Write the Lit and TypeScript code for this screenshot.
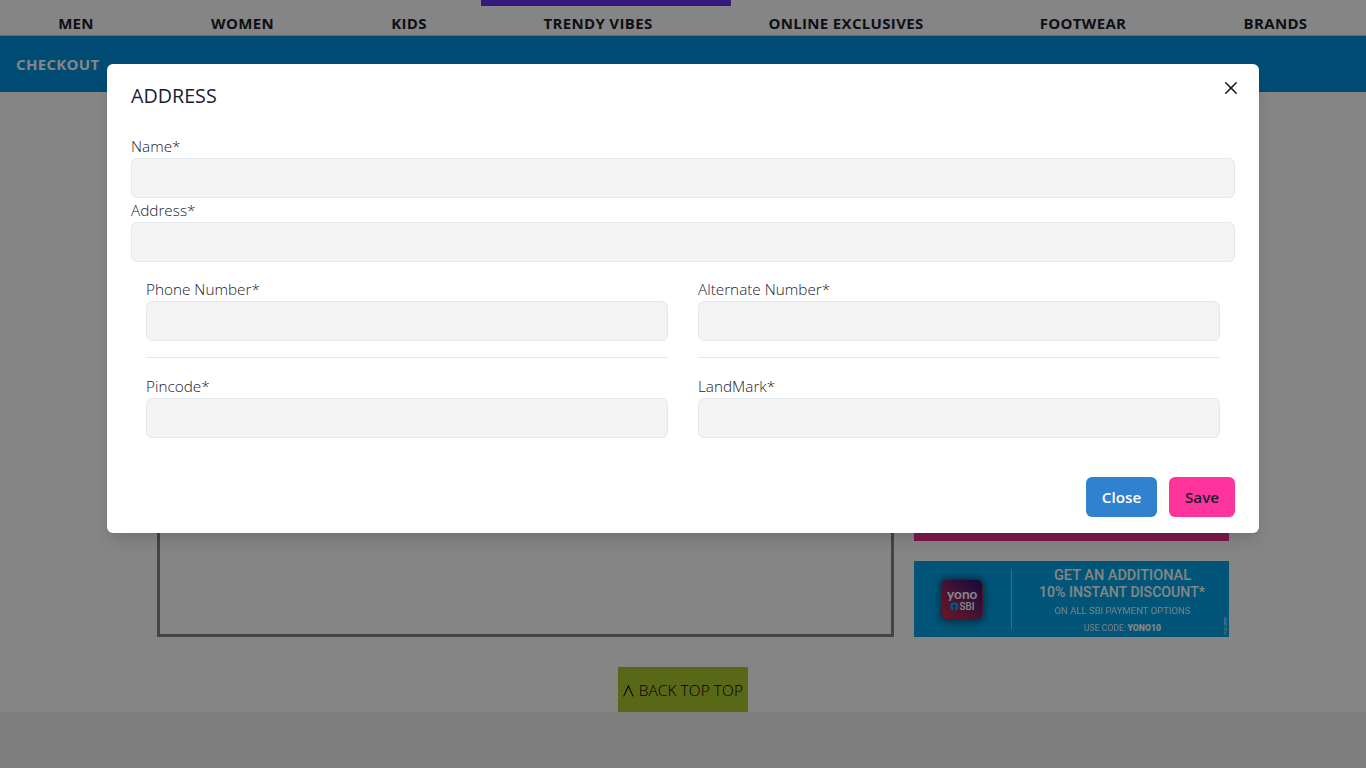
import { LitElement, html, css } from "lit";
import { customElement, property } from "lit/decorators.js";

@customElement("form-field")
class FormField extends LitElement {
  @property() label = "";
  static styles = css`
    :host { display: block; }
    .label { display: block; height: 24px; line-height: 24px; font-size: 15.3px; font-weight: 340; white-space: nowrap; }
    .input { display: block; box-sizing: border-box; width: 100%; height: 40px; margin: 0; padding: 0 16px; border: 1px solid #e2e8f0; border-radius: 6px; background: #f3f3f3; font: inherit; outline: none; }
  `;
  render() {
    return html`<label class="label" for="field">${this.label}</label><input class="input" id="field" />`;
  }
}

@customElement("promo-banner")
class PromoBanner extends LitElement {
  static styles = css`
    :host { display: block; height: 76px; }
    .art { display: block; width: 315px; height: 76px; font-family: Roboto, "Liberation Sans", sans-serif; }
  `;
  render() {
    return html`<svg class="art" viewBox="0 0 315 76">
      <defs>
        <linearGradient id="tile" x1="0" y1="1" x2="1" y2="0">
          <stop offset="0" stop-color="#d82c42" /><stop offset=".5" stop-color="#7c2468" /><stop offset="1" stop-color="#24156e" />
        </linearGradient>
        <filter id="glow" x="-40%" y="-40%" width="180%" height="180%"><feGaussianBlur stdDeviation="4" /></filter>
      </defs>
      <rect width="315" height="76" fill="#00a4e7" />
      <rect x="26" y="17" width="44" height="44" rx="7" fill="#073451" opacity=".75" filter="url(#glow)" />
      <rect x="27.5" y="18.5" width="41" height="40" rx="6" fill="url(#tile)" stroke="#92285c" />
      <g fill="#fff">
        <text x="33" y="38" font-family="Lato, sans-serif" font-size="13.5" font-weight="700" textLength="30.5" lengthAdjust="spacingAndGlyphs">yono</text>
        <circle cx="40.3" cy="45.5" r="4.2" fill="#08a8e8" />
        <circle cx="40.3" cy="45" r="1.2" fill="#3a2674" /><path d="M39.8 45h1v4.7h-1z" fill="#3a2674" />
        <text x="45.5" y="49.3" font-size="10.5" font-weight="500" textLength="15" lengthAdjust="spacingAndGlyphs">SBI</text>
        <path d="M97 8h1v60h-1z" opacity=".45" />
        <text x="140" y="19" font-size="14.2" font-weight="500" textLength="137" lengthAdjust="spacingAndGlyphs">GET AN ADDITIONAL</text>
        <text x="125" y="36" font-size="14.2" font-weight="500" textLength="166" lengthAdjust="spacingAndGlyphs">10% INSTANT DISCOUNT*</text>
        <text x="140.5" y="52.5" font-size="9.8" opacity=".9" textLength="136" lengthAdjust="spacingAndGlyphs">ON ALL SBI PAYMENT OPTIONS</text>
        <text x="170" y="69.7" font-size="8.8" opacity=".9" textLength="42" lengthAdjust="spacingAndGlyphs">USE CODE:</text>
        <text x="213.5" y="69.7" font-size="8.4" font-weight="900" textLength="33.5" lengthAdjust="spacingAndGlyphs">YONO10</text>
        <text transform="translate(313 73.5) rotate(-90)" font-size="3.6" opacity=".8" textLength="18">*T&amp;C APPLY</text>
      </g>
    </svg>`;
  }
}

@customElement("app-root")
class AppRoot extends LitElement {
  static styles = css`
    :host { display: block; position: relative; width: 1366px; height: 768px; overflow: hidden; background: #fff; color: #1a202c; font-family: "Open Sans", "Noto Sans", sans-serif; font-size: 16px; line-height: 24px; }
    .page { display: flex; flex-direction: column; height: 768px; }
    .hero { height: 6px; padding-left: 481px; }
    .hero-strip { width: 250px; height: 6px; background: #6830ea; }
    .nav { display: flex; justify-content: space-around; height: 29px; border-bottom: 1px solid #ccc; font-weight: 680; font-size: 15px; letter-spacing: .33px; line-height: 34px; white-space: nowrap; }
    .item { display: flex; justify-content: center; }
    .w36 { width: 36px; } .w65 { width: 65px; } .w110 { width: 110px; } .w154 { width: 154px; } .w88 { width: 88px; }
    .bar { box-sizing: border-box; height: 56px; padding: 0 16px; background: #0092df; color: #fff; font-weight: 680; font-size: 15px; letter-spacing: .33px; line-height: 56px; }
    .content { display: flex; gap: 20px; height: 545px; padding-left: 157px; }
    .box { box-sizing: border-box; width: 737px; border: 3px solid #828282; border-top: 0; }
    .side { display: flex; flex-direction: column; gap: 20px; width: 315px; }
    .offer { height: 449px; background: linear-gradient(#fff 400px, #ed338f 400px); }
    .top { display: flex; justify-content: center; padding-top: 30px; }
    .back { display: flex; align-items: center; gap: 5px; box-sizing: border-box; width: 130px; height: 45px; padding: 3px 5px 0; background: #abc72b; color: #000; font-weight: 340; font-size: 15.4px; letter-spacing: .1px; white-space: nowrap; }
    .caret { width: 11px; height: 12px; }
    .foot { flex: 1; background: #f2f2f2; }
    .overlay { position: absolute; inset: 0; display: flex; justify-content: center; align-items: flex-start; padding-top: 64px; background: rgba(0, 0, 0, .48); }
    .modal { position: relative; box-sizing: border-box; width: 1152px; height: 469px; background: #fff; border-radius: 6px; box-shadow: 0 10px 15px -3px rgba(0, 0, 0, .1), 0 4px 6px -2px rgba(0, 0, 0, .05); }
    .title { margin: 0; padding: 16px 24px; height: 30px; line-height: 31px; font-size: 19.7px; font-weight: 500; }
    .close-x { position: absolute; top: 8px; right: 12px; display: flex; align-items: center; justify-content: center; width: 32px; height: 32px; padding: 0; border: 0; background: none; color: #1a202c; }
    .body { padding: 8px 24px; }
    .pairs { display: grid; grid-template-columns: 522px 522px; column-gap: 30px; padding: 15px 15px 0; }
    .cell-top { padding-bottom: 16px; border-bottom: 1px solid #e2e8f0; margin-bottom: 16px; }
    .actions { display: flex; justify-content: flex-end; gap: 12px; padding: 31px 24px 16px; }
    .btn { height: 40px; padding: 0; border: 0; border-radius: 6px; font: 600 15.2px/40px "Open Sans", "Noto Sans", sans-serif; }
    .close { width: 71px; background: #3182ce; color: #fff; }
    .save { width: 66px; background: #ff339c; color: #1a202c; font-weight: 540; }
  `;
  private nav = [["MEN", "w36"], ["WOMEN", "w65"], ["KIDS", "w36"], ["TRENDY VIBES", "w110"], ["ONLINE EXCLUSIVES", "w154"], ["FOOTWEAR", "w88"], ["BRANDS", "w65"]];
  render() {
    return html`
      <div class="page">
        <div class="hero"><div class="hero-strip"></div></div>
        <nav class="nav">${this.nav.map(([name, size]) => html`<span class="item ${size}">${name}</span>`)}</nav>
        <div class="bar">CHECKOUT</div>
        <div class="content">
          <div class="box"></div>
          <div class="side"><div class="offer"></div><promo-banner></promo-banner></div>
        </div>
        <div class="top">
          <div class="back"><svg class="caret" viewBox="0 0 11 12"><path d="M.6 11.5 5.5.8l4.9 10.7" fill="none" stroke="#000" stroke-width="1.1" /></svg><span>BACK TOP TOP</span></div>
        </div>
        <div class="foot"></div>
      </div>
      <div class="overlay">
        <section class="modal" role="dialog" aria-label="ADDRESS">
          <h2 class="title">ADDRESS</h2>
          <button class="close-x" aria-label="Close"><svg width="12" height="12" viewBox="0 0 24 24"><path fill="currentColor" d="M.439 21.44a1.5 1.5 0 0 0 2.122 2.121l9.262-9.261a.25.25 0 0 1 .354 0l9.262 9.263a1.5 1.5 0 1 0 2.122-2.121L14.3 12.177a.25.25 0 0 1 0-.354l9.263-9.262A1.5 1.5 0 0 0 21.439.44L12.177 9.7a.25.25 0 0 1-.354 0L2.561.44A1.5 1.5 0 0 0 .439 2.561L9.7 11.823a.25.25 0 0 1 0 .354Z" /></svg></button>
          <div class="body">
            <form-field label="Name*"></form-field>
            <form-field label="Address*"></form-field>
            <div class="pairs">
              <div class="cell-top"><form-field label="Phone Number*"></form-field></div>
              <div class="cell-top"><form-field label="Alternate Number*"></form-field></div>
              <form-field label="Pincode*"></form-field>
              <form-field label="LandMark*"></form-field>
            </div>
          </div>
          <div class="actions"><button class="btn close">Close</button><button class="btn save">Save</button></div>
        </section>
      </div>`;
  }
}
